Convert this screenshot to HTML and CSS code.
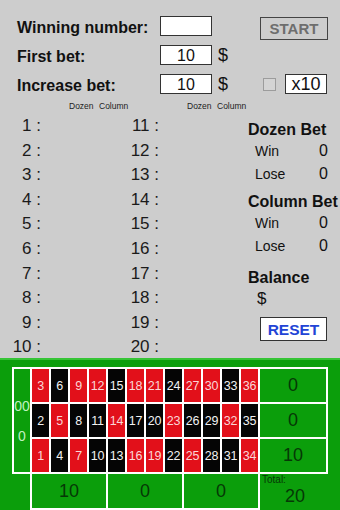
FILE: index.html
```html
<!DOCTYPE html>
<html>
<head>
  <title>Roulette Bet</title>
  <meta name="viewport" content="width=device-width, initial-scale=1.0, user-scalable=no">
  <link rel="stylesheet" href="styles.css">
</head>
<body>
  <div class="form">
    <div class="row">
      <div class="label">Winning number:</div>
      <div class="box"></div>
      <div class="start">START</div>
    </div>
    <div class="row">
      <div class="label">First bet:</div>
      <div class="box">10</div>
      <div class="dollar">$</div>
    </div>
    <div class="row last">
      <div class="label">Increase bet:</div>
      <div class="box">10</div>
      <div class="dollar">$</div>
      <div class="multi">
        <div class="check"></div>
        <div class="x10">x10</div>
      </div>
    </div>
  </div>

  <div class="main">
    <div class="list">
      <div class="hd"><span>Dozen</span>Column</div>
      <div class="num">1 :</div>
      <div class="num">2 :</div>
      <div class="num">3 :</div>
      <div class="num">4 :</div>
      <div class="num">5 :</div>
      <div class="num">6 :</div>
      <div class="num">7 :</div>
      <div class="num">8 :</div>
      <div class="num">9 :</div>
      <div class="num">10 :</div>
    </div>
    <div class="list">
      <div class="hd"><span>Dozen</span>Column</div>
      <div class="num">11 :</div>
      <div class="num">12 :</div>
      <div class="num">13 :</div>
      <div class="num">14 :</div>
      <div class="num">15 :</div>
      <div class="num">16 :</div>
      <div class="num">17 :</div>
      <div class="num">18 :</div>
      <div class="num">19 :</div>
      <div class="num">20 :</div>
    </div>

    <div class="panel">
      <div class="ptitle">Dozen Bet</div>
      <div class="stat"><span>Win</span><b>0</b></div>
      <div class="stat"><span>Lose</span><b>0</b></div>
      <div class="ptitle next">Column Bet</div>
      <div class="stat"><span>Win</span><b>0</b></div>
      <div class="stat"><span>Lose</span><b>0</b></div>
      <div class="ptitle balance">Balance</div>
      <div class="cash">$</div>
      <div class="reset">RESET</div>
    </div>
  </div>

  <!-- roulette layout -->
  <div class="table">
    <div class="board">
      <div class="zero"><span>00</span><span>0</span></div>

      <div class="cell red">3</div>
      <div class="cell black">6</div>
      <div class="cell red">9</div>
      <div class="cell red">12</div>
      <div class="cell black">15</div>
      <div class="cell red">18</div>
      <div class="cell red">21</div>
      <div class="cell black">24</div>
      <div class="cell red">27</div>
      <div class="cell red">30</div>
      <div class="cell black">33</div>
      <div class="cell red">36</div>
      <div class="col">0</div>

      <div class="cell black">2</div>
      <div class="cell red">5</div>
      <div class="cell black">8</div>
      <div class="cell black">11</div>
      <div class="cell red">14</div>
      <div class="cell black">17</div>
      <div class="cell black">20</div>
      <div class="cell red">23</div>
      <div class="cell black">26</div>
      <div class="cell black">29</div>
      <div class="cell red">32</div>
      <div class="cell black">35</div>
      <div class="col">0</div>

      <div class="cell red">1</div>
      <div class="cell black">4</div>
      <div class="cell red">7</div>
      <div class="cell black">10</div>
      <div class="cell black">13</div>
      <div class="cell red">16</div>
      <div class="cell red">19</div>
      <div class="cell black">22</div>
      <div class="cell red">25</div>
      <div class="cell black">28</div>
      <div class="cell black">31</div>
      <div class="cell red">34</div>
      <div class="col">10</div>
    </div>

    <div class="bottom">
      <div class="dozens">
        <div class="dozen">10</div>
        <div class="dozen">0</div>
        <div class="dozen">0</div>
      </div>
      <div class="total">
        <small>Total:</small>
        <div>20</div>
      </div>
    </div>
  </div>
</body>
</html>
```

FILE: styles.css
```css
    body {
      margin: 0;
      padding: 0;
      width: 340px;
      height: 510px;
      overflow: hidden;
      font-family: "Liberation Sans", Arial, sans-serif;
      background: #cdcdcd;
      color: #111;
    }

    /* top form */
    .form {
      padding: 16px 0 0 17px;
    }
    .row {
      display: flex;
      align-items: flex-start;
      height: 29px;
    }
    .row.last {
      height: 27px;
    }
    .label {
      width: 143px;
      font-weight: bold;
      font-size: 16px;
      line-height: 23px;
      white-space: nowrap;
    }
    .box {
      width: 50px;
      height: 18px;
      border: 1px solid #333;
      background: #fff;
      text-align: center;
      font-size: 16px;
      line-height: 19px;
    }
    .dollar {
      margin-left: 6px;
      font-size: 18px;
      line-height: 21px;
    }
    .start {
      margin: 1px 12px 0 auto;
      width: 66px;
      height: 21px;
      border: 1px solid #444;
      text-align: center;
      font-weight: bold;
      font-size: 15px;
      line-height: 22px;
      color: #6e6e6e;
    }
    .multi {
      display: flex;
      align-items: center;
      gap: 9px;
      height: 20px;
      margin: 0 13px 0 auto;
    }
    .check {
      width: 11px;
      height: 11px;
      border: 1px solid #9c9c9c;
      background: #d4d4d4;
    }
    .x10 {
      width: 40px;
      height: 18px;
      border: 1px solid #333;
      background: #fff;
      text-align: center;
      font-size: 18px;
      line-height: 19px;
    }

    /* number lists + results */
    .main {
      display: flex;
      height: 257px;
    }
    .list {
      width: 118px;
    }
    .hd {
      height: 10px;
      margin-bottom: 3px;
      padding-left: 69px;
      font-size: 8.5px;
      line-height: 10px;
      color: #222;
      white-space: nowrap;
    }
    .hd span {
      display: inline-block;
      width: 30px;
    }
    .num {
      width: 41px;
      text-align: right;
      font-size: 17px;
      line-height: 24.6px;
      color: #1a1a1a;
      white-space: nowrap;
    }

    .panel {
      width: 80px;
      margin-left: 12px;
      padding-top: 19px;
      white-space: nowrap;
    }
    .ptitle {
      font-weight: bold;
      font-size: 16px;
      line-height: 20px;
    }
    .ptitle.next {
      margin-top: 7px;
    }
    .ptitle.balance {
      margin-top: 11px;
    }
    .stat {
      display: flex;
      justify-content: space-between;
      align-items: baseline;
      padding-left: 7px;
      line-height: 22.5px;
    }
    .stat span {
      font-size: 14px;
    }
    .stat b {
      font-weight: normal;
      font-size: 16px;
    }
    .cash {
      padding-left: 9px;
      font-size: 17px;
      line-height: 21px;
    }
    .reset {
      width: 65px;
      height: 22px;
      margin: 8px 0 0 12px;
      border: 1px solid #333;
      background: #fff;
      text-align: center;
      font-weight: bold;
      font-size: 15.5px;
      line-height: 23px;
      color: #2244d6;
    }

    /* roulette table */
    .table {
      height: 150px;
      background: #0b9e0b;
      border-top: 2px solid #36c436;
    }
    .board {
      display: grid;
      grid-template-columns: 16px repeat(12, 17px) 66px;
      grid-template-rows: repeat(3, 33px);
      gap: 2px;
      width: fit-content;
      margin: 7px 0 0 12px;
      padding: 2px;
      background: #fff;
    }
    .zero {
      grid-row: 1 / 4;
      display: flex;
      flex-direction: column;
      justify-content: center;
      align-items: center;
      background: #0b9e0b;
      color: #c0f2c0;
      font-size: 14px;
      line-height: 30px;
    }
    .cell {
      display: flex;
      justify-content: center;
      align-items: center;
      font-size: 12.5px;
      letter-spacing: -0.3px;
    }
    .red {
      background: #e2101a;
      color: #fbd6d6;
    }
    .black {
      background: #050505;
      color: #f2f2f2;
    }
    .col {
      display: flex;
      justify-content: center;
      align-items: center;
      background: #0b9e0b;
      color: #063806;
      font-size: 18px;
    }

    .bottom {
      display: flex;
      margin-left: 30px;
    }
    .dozens {
      display: grid;
      grid-template-columns: repeat(3, 74px);
      grid-template-rows: 34px;
      gap: 2px;
      padding: 0 2px 2px;
      background: #fff;
    }
    .dozen {
      display: flex;
      justify-content: center;
      align-items: center;
      background: #0b9e0b;
      color: #063806;
      font-size: 18px;
    }
    .total {
      width: 66px;
      padding-left: 2px;
      color: #063806;
      text-align: center;
      font-size: 18px;
      line-height: 22px;
    }
    .total small {
      display: block;
      text-align: left;
      font-size: 10px;
      line-height: 10px;
      margin-top: 1px;
    }
```
